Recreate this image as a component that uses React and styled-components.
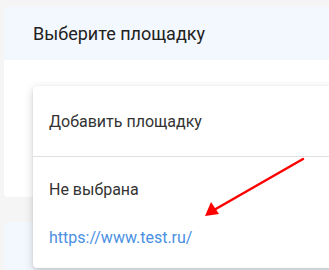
import React from "react";
import styled, { createGlobalStyle } from "styled-components";

const GlobalStyle = createGlobalStyle`
  html, body {
    margin: 0;
    padding: 0;
    background: #f5f5f5;
    font-family: Roboto, "Noto Sans", sans-serif;
  }
`;

const Page = styled.div`
  position: relative;
  width: 329px;
  height: 270px;
  overflow: hidden;
  padding: 7px 0 0 4px;
  box-sizing: border-box;
  display: flex;
  flex-direction: column;
  gap: 25px;
`;

const Card = styled.div`
  width: 360px;
  background: #ffffff;
  border-radius: 4px;
  overflow: hidden;
  flex-shrink: 0;
`;

const CardHeader = styled.div`
  height: 53px;
  background: #f3f8fe;
  display: flex;
  align-items: center;
  padding-left: 29px;
  font-size: 18px;
  font-weight: 400;
  color: #212121;
`;

const CardBody = styled.div`
  height: ${(p) => p.h}px;
`;

const Menu = styled.div`
  position: absolute;
  left: 33px;
  top: 86px;
  width: 340px;
  height: 182px;
  background: #ffffff;
  border-radius: 4px;
  box-shadow: 0 3px 10px rgba(0, 0, 0, 0.18), 0 1px 3px rgba(0, 0, 0, 0.08);
  display: flex;
  flex-direction: column;
`;

const MenuSection = styled.div`
  display: flex;
  flex-direction: column;
  padding: ${(p) => p.pad || "0"};
  border-top: ${(p) => (p.divided ? "1px solid #e0e0e0" : "none")};
`;

const MenuItem = styled.div`
  height: ${(p) => p.h}px;
  display: flex;
  align-items: center;
  padding-left: 16px;
  font-size: 16px;
  color: ${(p) => (p.link ? "#4a90e2" : "#333333")};
`;

const Arrow = styled.svg`
  position: absolute;
  left: 0;
  top: 0;
  pointer-events: none;
`;

export default function App() {
  return (
    <>
      <GlobalStyle />
      <Page>
        <Card>
          <CardHeader>Выберите площадку</CardHeader>
          <CardBody h={137} />
        </Card>
        <Card>
          <CardHeader />
        </Card>
        <Menu>
          <MenuSection>
            <MenuItem h={70}>Добавить площадку</MenuItem>
          </MenuSection>
          <MenuSection divided pad="8px 0 7px 0">
            <MenuItem h={48}>Не выбрана</MenuItem>
            <MenuItem h={48} link>
              https://www.test.ru/
            </MenuItem>
          </MenuSection>
        </Menu>
        <Arrow width="329" height="270" viewBox="0 0 329 270">
          <line
            x1="303"
            y1="159"
            x2="214"
            y2="210"
            stroke="#ff0000"
            strokeWidth="2.5"
            strokeLinecap="round"
          />
          <polygon points="205,216 211,202 219,214" fill="#ff0000" />
        </Arrow>
      </Page>
    </>
  );
}
